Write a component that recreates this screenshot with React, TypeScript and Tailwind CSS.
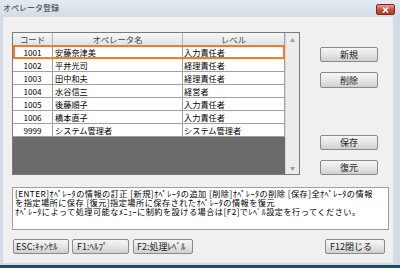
import React from 'react'

type Operator = {
  code: string
  name: string
  level: string
}

const operators: Operator[] = [
  { code: '1001', name: '安藤奈津美', level: '入力責任者' },
  { code: '1002', name: '平井光司', level: '経理責任者' },
  { code: '1003', name: '田中和夫', level: '経理責任者' },
  { code: '1004', name: '水谷信三', level: '経営者' },
  { code: '1005', name: '後藤順子', level: '入力責任者' },
  { code: '1006', name: '橋本直子', level: '入力責任者' },
  { code: '9999', name: 'システム管理者', level: 'システム管理者' },
]

function WinButton({ label, className }: { label: string; className: string }) {
  return (
    <button
      className={`flex items-center justify-center rounded-[2px] border border-[#8a8a8a] bg-gradient-to-b from-[#f6f6f6] via-[#e6e6e6] to-[#cfcfcf] text-[9px] leading-none text-[#222] ${className}`}
    >
      {label}
    </button>
  )
}

function OperatorGrid() {
  return (
    <div className="flex h-[143px] w-[288px] border border-[#7a7a7a] bg-[#6b6b6b]">
      {/* grid body */}
      <div className="flex flex-1 flex-col">
        <div className="flex h-[13px] bg-gradient-to-b from-[#f7f7f7] to-[#e3e3e3] text-[8.4px] leading-[12px] text-[#444] border-b border-[#a0a0a0]">
          <div className="w-[40px] border-r border-[#b5b5b5] text-center">コード</div>
          <div className="w-[130px] border-r border-[#b5b5b5] text-center">オペレータ名</div>
          <div className="flex-1 border-r border-[#a0a0a0] text-center">レベル</div>
        </div>
        {operators.map((op, i) => (
          <div
            key={op.code}
            className="relative flex h-[13px] bg-white text-[8.2px] leading-[12px] text-black border-b border-[#a0a0a0]"
          >
            <div className="w-[40px] border-r border-[#a0a0a0] text-center">{op.code}</div>
            <div className="w-[130px] border-r border-[#a0a0a0] pl-[2px]">{op.name}</div>
            <div className="flex-1 border-r border-[#a0a0a0] pl-[1px]">{op.level}</div>
            {i === 0 && (
              <div className="pointer-events-none absolute inset-x-0 -top-[1px] -bottom-[1px] border-2 border-[#f47b2a]" />
            )}
          </div>
        ))}
      </div>
      {/* scrollbar */}
      <div className="flex w-[14px] flex-col justify-between bg-[#ececec] border-l border-[#d8d8d8]">
        <div className="flex h-[13px] items-center justify-center text-[5px] text-[#9a9a9a]">▲</div>
        <div className="flex h-[13px] items-center justify-center text-[5px] text-[#9a9a9a]">▼</div>
      </div>
    </div>
  )
}

export default function App() {
  return (
    <div className="flex h-[268px] w-[400px] flex-col bg-[#1f4d5c] font-['Noto_Sans_CJK_JP','Noto_Sans',sans-serif]">
      {/* title bar */}
      <div className="flex h-[17px] items-start justify-between bg-gradient-to-b from-[#e4eaf1] to-[#d3dce6] pl-[3px] pr-[5px]">
        <span className="pt-[2px] text-[8px] leading-[11px] text-[#333]">オペレータ登録</span>
        <div className="mt-[4px] flex h-[11px] w-[19px] items-center justify-center rounded-[2px] border border-[#7a2a20] bg-gradient-to-b from-[#e8a090] via-[#c9503c] to-[#b73a28]">
          <svg width="7" height="6" viewBox="0 0 7 6">
            <path d="M1 0.5 L6 5.5 M6 0.5 L1 5.5" stroke="white" strokeWidth="1.6" />
          </svg>
        </div>
      </div>

      <div className="flex h-[246px]">
        <div className="w-[3px] bg-[#d3dce6]" />
        {/* client area */}
        <div className="flex w-[390px] flex-col bg-[#f0f0f0] pl-[9px] pt-[15px]">
          <div className="flex">
            <OperatorGrid />
            <div className="ml-[20px] flex h-[143px] flex-col justify-between pt-[15px]">
              <div className="flex flex-col gap-[10px]">
                <WinButton label="新規" className="h-[15px] w-[58px]" />
                <WinButton label="削除" className="h-[16px] w-[58px]" />
              </div>
              <div className="flex flex-col gap-[10px]">
                <WinButton label="保存" className="h-[15px] w-[58px]" />
                <WinButton label="復元" className="h-[15px] w-[58px]" />
              </div>
            </div>
          </div>

          {/* help message */}
          <div className="mt-[12px] h-[43px] w-[377px] border border-[#a0a0a0] bg-white px-[2px] pt-[1px] text-[8.2px] leading-[9px] tracking-[0.45px] text-black">
            <div>[ENTER]ｵﾍﾟﾚｰﾀの情報の訂正 [新規]ｵﾍﾟﾚｰﾀの追加 [削除]ｵﾍﾟﾚｰﾀの削除 [保存]全ｵﾍﾟﾚｰﾀの情報</div>
            <div>を指定場所に保存 [復元]指定場所に保存されたｵﾍﾟﾚｰﾀの情報を復元</div>
            <div>ｵﾍﾟﾚｰﾀによって処理可能なﾒﾆｭｰに制約を設ける場合は[F2]でﾚﾍﾞﾙ設定を行ってください。</div>
          </div>

          {/* function keys */}
          <div className="mt-[9px] flex pl-[1px] pr-[8px]">
            <WinButton label="ESC:ｷｬﾝｾﾙ" className="h-[15px] w-[56px] !justify-start pl-[2px]" />
            <WinButton label="F1:ﾍﾙﾌﾟ" className="ml-[3px] h-[15px] w-[57px] !justify-start pl-[4px]" />
            <WinButton label="F2:処理ﾚﾍﾞﾙ" className="ml-[4px] h-[15px] w-[60px] !justify-start pl-[3px]" />
            <WinButton label="F12閉じる" className="ml-auto h-[15px] w-[60px] !justify-start pl-[4px]" />
          </div>
        </div>
        <div className="w-[7px] bg-[#d3dce6]" />
      </div>
      <div className="h-[2px] bg-[#d3dce6]" />
    </div>
  )
}
